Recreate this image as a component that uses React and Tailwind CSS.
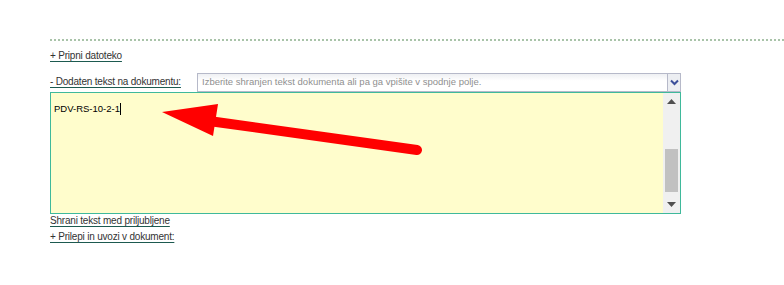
import React from "react";

const linkCls =
  "whitespace-nowrap text-[10px] tracking-[-0.2px] leading-[13px] text-[#333] underline decoration-[#1d5a50] underline-offset-[2px] cursor-pointer";

function FakeSelect() {
  return (
    <div className="flex h-[19px] w-[484px] border border-[#b6b9c9] bg-gradient-to-b from-[#eef0f3] to-white to-[40%]">
      <div className="flex flex-1 items-center pl-[4px] text-[9.5px] text-[#8f8f8f]">
        Izberite shranjen tekst dokumenta ali pa ga vpišite v spodnje polje.
      </div>
      <div className="flex w-[13px] items-center justify-center border-l border-[#b6b9c9] bg-[#eceef2]">
        <svg width="9" height="7" viewBox="0 0 9 7">
          <path d="M1 1.5 L4.5 5 L8 1.5" fill="none" stroke="#3b4f9a" strokeWidth="2" />
        </svg>
      </div>
    </div>
  );
}

function FakeTextarea() {
  return (
    <div className="flex h-[122px] w-[631px] border border-[#3fb99b] bg-[#fffdcc]">
      <div className="flex-1 pl-[3px] pt-[10px] text-[9.5px] leading-[12px] text-black">
        PDV-RS-10-2-1<span className="inline-block h-[12px] w-px bg-black align-middle" />
      </div>
      <div className="flex w-[17px] flex-col items-center bg-[#f0f0f0]">
        <div className="flex h-[17px] items-center justify-center">
          <svg width="9" height="5" viewBox="0 0 9 5">
            <path d="M0 5 L4.5 0 L9 5 Z" fill="#505050" />
          </svg>
        </div>
        <div className="flex-1" />
        <div className="mb-[4px] h-[43px] w-[13px] bg-[#c1c1c1]" />
        <div className="flex h-[17px] items-center justify-center">
          <svg width="9" height="5" viewBox="0 0 9 5">
            <path d="M0 0 L9 0 L4.5 5 Z" fill="#505050" />
          </svg>
        </div>
      </div>
    </div>
  );
}

export default function App() {
  return (
    <div
      className="relative h-[285px] w-[784px] overflow-hidden bg-white"
      style={{ fontFamily: '"Liberation Sans", Arial, sans-serif' }}
    >
      <div className="pl-[50px] pt-[39px]">
        <div className="h-[2px] border-t-2 border-dotted border-[#a9c3a9]" />
        <div className="mt-[8px] flex">
          <span className={linkCls}>+ Pripni datoteko</span>
        </div>
        <div className="mt-[11px] flex items-start">
          <span className={`${linkCls} mt-[2px] w-[147px]`}>- Dodaten tekst na dokumentu:</span>
          <FakeSelect />
        </div>
        <FakeTextarea />
        <div className="flex">
          <span className={linkCls}>Shrani tekst med priljubljene</span>
        </div>
        <div className="mt-[3px] flex">
          <span className={linkCls}>+ Prilepi in uvozi v dokument:</span>
        </div>
      </div>

      {/* annotation arrow */}
      <svg className="pointer-events-none absolute left-0 top-0" width="784" height="285">
        <line x1="209" y1="121" x2="417" y2="150" stroke="#ff0000" strokeWidth="10" strokeLinecap="round" />
        <polygon points="162,112 218,104 213,136" fill="#ff0000" />
      </svg>
    </div>
  );
}
